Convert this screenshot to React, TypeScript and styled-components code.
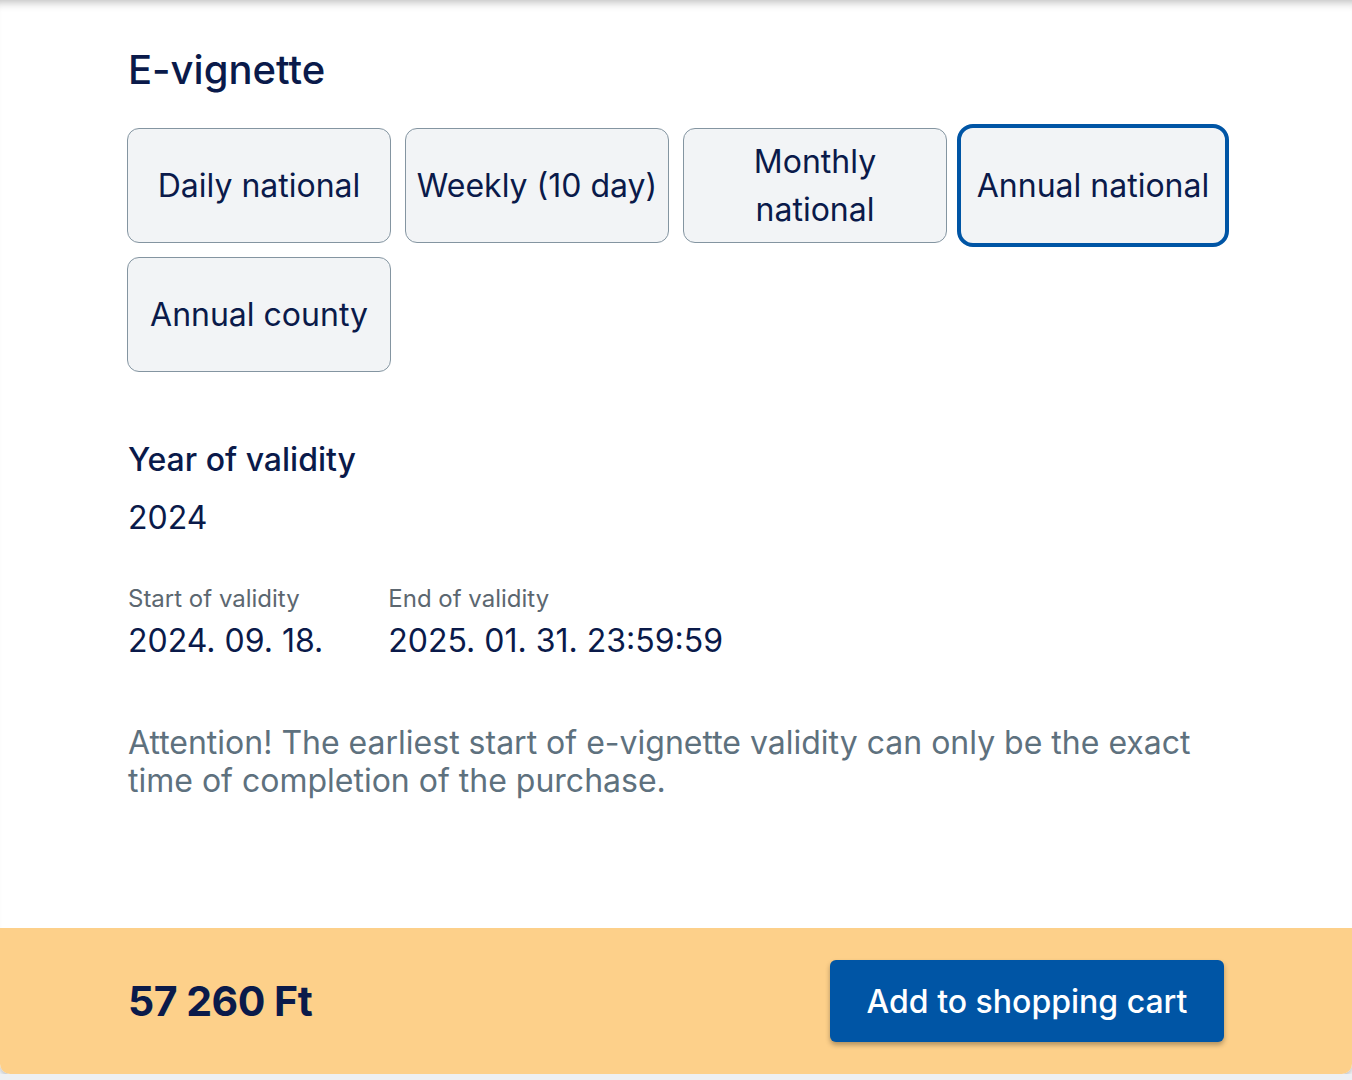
import React, { useState } from 'react';
import styled, { createGlobalStyle } from 'styled-components';

const GlobalStyle = createGlobalStyle`
  html, body {
    margin: 0;
    padding: 0;
    background: #eef0f3;
    font-family: Inter, "Noto Sans", "Liberation Sans", sans-serif;
    -webkit-font-smoothing: antialiased;
  }
`;

const Card = styled.div`
  width: 1352px;
  height: 1074px;
  display: flex;
  flex-direction: column;
  background: #ffffff;
  border-radius: 0 0 10px 10px;
  box-shadow: inset 0 10px 10px -8px rgba(0, 0, 0, 0.28), 0 2px 4px rgba(0, 0, 0, 0.2);
  overflow: hidden;
`;

const Body = styled.div`
  flex: 1;
  padding: 44px 127px 0 128px;
  color: #0a1a4a;
`;

const Title = styled.h1`
  margin: 0;
  font-size: 40px;
  font-weight: 500;
  line-height: 52px;
`;

const Options = styled.div`
  margin: 32px 0 0 -1px;
  display: grid;
  grid-template-columns: repeat(4, 1fr);
  gap: 14px;
`;

const Option = styled.button<{ $active?: boolean }>`
  height: 115px;
  box-sizing: border-box;
  padding: 0 8px;
  background: #f2f4f6;
  border: 1.5px solid #8495a1;
  border-radius: 12px;
  font-family: inherit;
  font-size: 32px;
  font-weight: 400;
  line-height: 48px;
  color: #0a1a4a;
  cursor: pointer;
  ${(p) =>
    p.$active &&
    `
    height: 123px;
    border: 4px solid #0055a5;
    border-radius: 16px;
    margin: -4px;
  `}
`;

const Section = styled.div`
  margin-top: 68px;
`;

const Label = styled.div`
  font-size: 32px;
  font-weight: 500;
  line-height: 40px;
`;

const Year = styled.div`
  margin-top: 18px;
  font-size: 32px;
  line-height: 40px;
`;

const Dates = styled.div`
  margin-top: 46px;
  display: flex;
  gap: 65px;
`;

const DateCol = styled.div`
  display: flex;
  flex-direction: column;
`;

const DateLabel = styled.div`
  font-size: 24px;
  line-height: 30px;
  color: #5c6770;
`;

const DateValue = styled.div`
  margin-top: 7px;
  font-size: 32px;
  line-height: 40px;
`;

const Note = styled.p`
  margin: 63px 0 0;
  font-size: 32px;
  line-height: 38px;
  color: #5e717e;
`;

const Footer = styled.div`
  height: 146px;
  flex-shrink: 0;
  padding: 0 128px;
  display: flex;
  align-items: center;
  justify-content: space-between;
  background: #fdd08a;
`;

const Price = styled.div`
  font-size: 41px;
  font-weight: 700;
  color: #0a1a4a;
  letter-spacing: -0.5px;
`;

const CartButton = styled.button`
  width: 394px;
  height: 82px;
  border: none;
  border-radius: 6px;
  background: #0055a5;
  color: #ffffff;
  font-family: inherit;
  font-size: 32px;
  font-weight: 500;
  box-shadow: 0 3px 5px rgba(0, 0, 0, 0.3);
  cursor: pointer;
`;

const options = ['Daily national', 'Weekly (10 day)', 'Monthly national', 'Annual national', 'Annual county'];

export default function App() {
  const [selected, setSelected] = useState('Annual national');
  return (
    <>
      <GlobalStyle />
      <Card>
        <Body>
          <Title>E-vignette</Title>
          <Options>
            {options.map((o) => (
              <Option key={o} $active={o === selected} onClick={() => setSelected(o)}>
                {o}
              </Option>
            ))}
          </Options>
          <Section>
            <Label>Year of validity</Label>
            <Year>2024</Year>
            <Dates>
              <DateCol>
                <DateLabel>Start of validity</DateLabel>
                <DateValue>2024. 09. 18.</DateValue>
              </DateCol>
              <DateCol>
                <DateLabel>End of validity</DateLabel>
                <DateValue>2025. 01. 31. 23:59:59</DateValue>
              </DateCol>
            </Dates>
          </Section>
          <Note>
            Attention! The earliest start of e-vignette validity can only be the exact time of completion of the
            purchase.
          </Note>
        </Body>
        <Footer>
          <Price>57 260 Ft</Price>
          <CartButton>Add to shopping cart</CartButton>
        </Footer>
      </Card>
    </>
  );
}
